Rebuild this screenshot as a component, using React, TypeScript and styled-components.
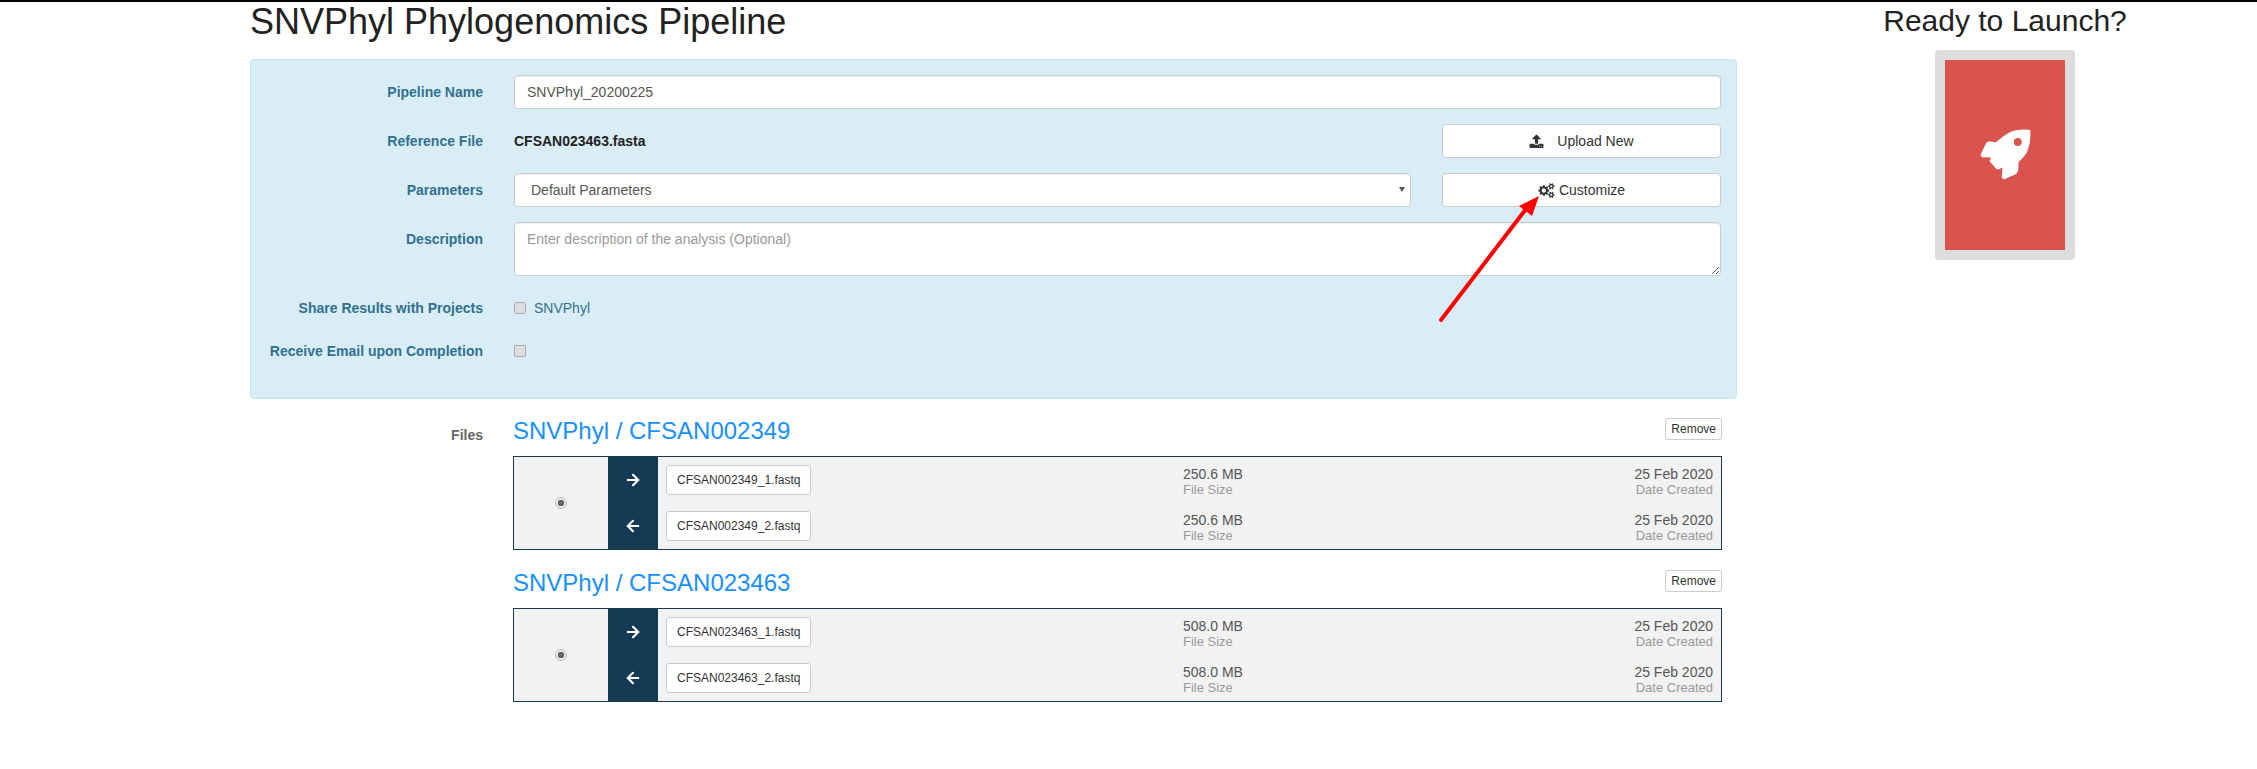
import React from 'react';
import styled, { createGlobalStyle } from 'styled-components';
import { ArrowLeft, ArrowRight } from 'lucide-react';

const GlobalStyle = createGlobalStyle`
  html, body {
    margin: 0;
    padding: 0;
    background: #fff;
  }
  body {
    font-family: "Liberation Sans", Arial, sans-serif;
    font-size: 14px;
    line-height: 20px;
    color: #333;
  }
  * {
    box-sizing: border-box;
  }
`;

const Page = styled.div`
  position: relative;
  display: flex;
  align-items: flex-start;
  min-height: 769px;
  padding-left: 250px;
  border-top: 2px solid #000;
`;

const Main = styled.main`
  width: 1487px;
  flex: none;
`;

const Title = styled.h1`
  margin: 0 0 17px;
  font-size: 36px;
  font-weight: 400;
  line-height: 40px;
  color: #222;
`;

const Panel = styled.section`
  height: 340px;
  padding: 15px 15px 0 0;
  background: #d9edf7;
  border: 1px solid #bce8f1;
  border-radius: 4px;
`;

const FormRow = styled.div<{ $height?: number; $gap?: number }>`
  display: grid;
  grid-template-columns: 232px 1fr;
  column-gap: 31px;
  min-height: ${(p) => p.$height ?? 34}px;
  margin-bottom: ${(p) => p.$gap ?? 15}px;
`;

const Label = styled.label`
  padding-top: 7px;
  font-weight: 700;
  text-align: right;
  color: #31708f;
`;

const Control = styled.input`
  display: block;
  width: 100%;
  height: 34px;
  padding: 6px 12px;
  font: 14px/20px "Liberation Sans", Arial, sans-serif;
  color: #555;
  background: #fff;
  border: 1px solid #ccc;
  border-radius: 4px;
  box-shadow: inset 0 1px 1px rgba(0, 0, 0, 0.075);
`;

const SelectWrap = styled.div`
  position: relative;
  &::after {
    content: '';
    position: absolute;
    top: 14px;
    right: 6px;
    border-top: 5px solid #555;
    border-left: 3px solid transparent;
    border-right: 3px solid transparent;
  }
`;

const Select = styled(Control).attrs({ as: 'select' })`
  padding-left: 16px;
  appearance: none;
`;

const TextArea = styled(Control).attrs({ as: 'textarea' })`
  height: 54px;
  &::placeholder {
    color: #999;
  }
`;

const SplitField = styled.div`
  display: grid;
  grid-template-columns: 1fr 279px;
  column-gap: 31px;
  align-items: center;
`;

const FileName = styled.strong`
  color: #222;
`;

const Button = styled.button`
  display: flex;
  align-items: center;
  justify-content: center;
  height: 34px;
  padding: 6px 12px;
  font: 14px/20px "Liberation Sans", Arial, sans-serif;
  color: #333;
  background: #fff;
  border: 1px solid #ccc;
  border-radius: 4px;
`;

const IconBox = styled.svg<{ $gap: number }>`
  width: ${(p) => (p.$gap > 5 ? 15 : 17)}px;
  height: 15px;
  margin-right: ${(p) => p.$gap}px;
  fill: #333;
`;

const CheckRow = styled.div`
  display: flex;
  align-items: center;
  height: 34px;
  color: #31708f;
`;

const Check = styled.input`
  appearance: none;
  width: 12px;
  height: 12px;
  margin: 0 8px 0 0;
  background: #ddd;
  border: 1px solid #aaa;
  border-radius: 2px;
`;

const FilesSection = styled.section`
  display: grid;
  grid-template-columns: 233px 1fr;
  column-gap: 30px;
  width: 1472px;
  margin-top: 19px;
`;

const FilesLabel = styled.div`
  padding-top: 7px;
  font-weight: 700;
  text-align: right;
  color: #666;
`;

const Sample = styled.div`
  margin-bottom: 20px;
`;

const SampleHeader = styled.div`
  display: flex;
  align-items: flex-start;
  justify-content: space-between;
  height: 26px;
  margin-bottom: 12px;
`;

const SampleName = styled.a`
  font-size: 24px;
  line-height: 26px;
  color: #1890ff;
`;

const RemoveButton = styled.button`
  height: 22px;
  padding: 1px 5px;
  font: 12px/18px "Liberation Sans", Arial, sans-serif;
  color: #333;
  background: #fff;
  border: 1px solid #ccc;
  border-radius: 3px;
`;

const SampleTable = styled.div`
  display: grid;
  grid-template-columns: 94px 50px 1fr;
  height: 94px;
  background: #f2f2f2;
  border: 1px solid #153a54;
`;

const RadioCell = styled.div`
  display: flex;
  align-items: center;
  justify-content: center;
`;

const Radio = styled.input`
  appearance: none;
  width: 12px;
  height: 12px;
  margin: 0;
  border: 1px solid #bbb;
  border-radius: 50%;
  background: radial-gradient(circle, #666 0 3px, #eee 3.6px);
`;

const DirectionCell = styled.div`
  display: grid;
  grid-template-rows: 46px 46px;
  background: #153a54;
  color: #fff;
  & > div {
    display: flex;
    align-items: center;
    justify-content: center;
  }
`;

const FileRows = styled.div`
  display: grid;
  grid-template-rows: 46px 46px;
`;

const FileRow = styled.div`
  display: grid;
  grid-template-columns: 145px 1fr 1fr;
  align-items: center;
  padding: 0 8px;
`;

const FileChip = styled.div`
  height: 30px;
  padding: 0 10px;
  font-size: 12px;
  line-height: 28px;
  white-space: nowrap;
  color: #333;
  background: #fff;
  border: 1px solid #ccc;
  border-radius: 3px;
`;

const Stat = styled.div<{ $right?: boolean }>`
  padding-left: ${(p) => (p.$right ? 0 : 372)}px;
  margin-top: 4px;
  text-align: ${(p) => (p.$right ? 'right' : 'left')};
  white-space: nowrap;
`;

const StatValue = styled.div`
  font-size: 14px;
  line-height: 16px;
  color: #555;
`;

const StatLabel = styled.div`
  font-size: 13px;
  line-height: 16px;
  color: #999;
`;

const Aside = styled.aside`
  display: flex;
  flex-direction: column;
  align-items: center;
  width: 268px;
  margin-left: 134px;
`;

const AsideTitle = styled.h2`
  margin: 2px 0 12px;
  font-size: 30px;
  font-weight: 400;
  line-height: 34px;
  color: #222;
`;

const LaunchButton = styled.button`
  display: flex;
  align-items: center;
  justify-content: center;
  width: 140px;
  height: 210px;
  padding: 0;
  background: #d9534f;
  border: 10px solid #ddd;
  border-radius: 4px;
`;

const RocketIcon = styled.svg`
  width: 53px;
  height: 53px;
  fill: #fff;
`;

const Annotation = styled.svg`
  position: absolute;
  top: -2px;
  left: 0;
  width: 2257px;
  height: 769px;
  pointer-events: none;
`;

const UPLOAD = 'M1344 1472q0-26-19-45t-45-19-45 19-19 45 19 45 45 19 45-19 19-45zm256 0q0-26-19-45t-45-19-45 19-19 45 19 45 45 19 45-19 19-45zm128-224v320q0 40-28 68t-68 28h-1472q-40 0-68-28t-28-68v-320q0-40 28-68t68-28h427q21 56 70.500 92t110.500 36h256q61 0 110.500-36t70.500-92h427q40 0 68 28t28 68zm-325-648q-17 40-59 40h-256v448q0 26-19 45t-45 19h-256q-26 0-45-19t-19-45v-448h-256q-42 0-59-40-17-39 14-69l448-448q18-19 45-19t45 19l448 448q31 30 14 69z';
const COGS = 'M896 896q0-106-75-181t-181-75-181 75-75 181 75 181 181 75 181-75 75-181zm768 512q0-52-38-90t-90-38-90 38-38 90q0 53 37.500 90.500t90.500 37.500 90.500-37.500 37.500-90.500zm0-1024q0-52-38-90t-90-38-90 38-38 90q0 53 37.500 90.500t90.500 37.500 90.500-37.500 37.500-90.500zm-384 421v185q0 10-7 19.500t-16 10.500l-155 24q-11 35-32 76 34 48 90 115 7 11 7 20 0 12-7 19-23 30-82.500 89.500t-78.500 59.500q-11 0-21-7l-115-90q-37 19-77 31-11 108-23 155-7 24-30 24h-186q-11 0-20-7.500t-10-17.500l-23-153q-34-10-75-31l-118 89q-7 7-20 7-11 0-21-8-144-133-144-160 0-9 7-19 10-14 41-53t47-61q-23-44-35-82l-152-24q-10-1-17-9.500t-7-19.500v-185q0-10 7-19.500t16-10.500l155-24q11-35 32-76-34-48-90-115-7-11-7-20 0-12 7-20 22-30 82-89t79-59q11 0 21 7l115 90q34-18 77-32 11-108 23-154 7-24 30-24h186q11 0 20 7.500t10 17.500l23 153q34 10 75 31l118-89q8-7 20-7 11 0 21 8 144 133 144 160 0 8-7 19-12 16-42 54t-45 60q23 48 34 82l152 23q10 2 17 10.500t7 19.500zm640 533v140q0 16-149 31-12 27-30 52 51 113 51 138 0 4-4 7-122 71-124 71-8 0-46-47t-52-68q-20 2-30 2t-30-2q-14 21-52 68t-46 47q-2 0-124-71-4-3-4-7 0-25 51-138-18-25-30-52-149-15-149-31v-140q0-16 149-31 13-29 30-52-51-113-51-138 0-4 4-7 4-2 35-20t59-34 30-16q8 0 46 46.500t52 67.500q20-2 30-2t30 2q51-71 92-112l6-2q4 0 124 70 4 3 4 7 0 25-51 138 17 23 30 52 149 15 149 31zm0-1024v140q0 16-149 31-12 27-30 52 51 113 51 138 0 4-4 7-122 71-124 71-8 0-46-47t-52-68q-20 2-30 2t-30-2q-14 21-52 68t-46 47q-2 0-124-71-4-3-4-7 0-25 51-138-18-25-30-52-149-15-149-31v-140q0-16 149-31 13-29 30-52-51-113-51-138 0-4 4-7 4-2 35-20t59-34 30-16q8 0 46 46.500t52 67.500q20-2 30-2t30 2q51-71 92-112l6-2q4 0 124 70 4 3 4 7 0 25-51 138 17 23 30 52 149 15 149 31z';
// traced from the older font glyph, coordinates are 3x pixels
const ROCKET = 'M330 272 Q331 267 325 267 Q290 264 265 276 Q245 288 226 305 L207 303 Q198 303 195 310 L181 340 Q178 349 186 350 L211 351 L207 362 L226 384 Q231 389 237 386 L246 381 L244 408 Q244 418 253 416 L284 402 Q292 398 293 390 L295 364 Q315 347 322 330 Q332 305 330 272 Z M292 292 A12 12 0 1 0 292 316 A12 12 0 1 0 292 292 Z';

const samples = [
  { name: 'SNVPhyl / CFSAN002349', id: 'CFSAN002349', size: '250.6 MB' },
  { name: 'SNVPhyl / CFSAN023463', id: 'CFSAN023463', size: '508.0 MB' },
];

const App = () => (
  <>
    <GlobalStyle />
    <Page>
      <Main>
        <Title>SNVPhyl Phylogenomics Pipeline</Title>
        <Panel>
          <FormRow>
            <Label>Pipeline Name</Label>
            <Control defaultValue="SNVPhyl_20200225" />
          </FormRow>
          <FormRow>
            <Label>Reference File</Label>
            <SplitField>
              <FileName>CFSAN023463.fasta</FileName>
              <Button>
                <IconBox $gap={13} viewBox="0 0 1792 1792"><path d={UPLOAD} /></IconBox>
                Upload New
              </Button>
            </SplitField>
          </FormRow>
          <FormRow>
            <Label>Parameters</Label>
            <SplitField>
              <SelectWrap>
                <Select defaultValue="default">
                  <option value="default">Default Parameters</option>
                </Select>
              </SelectWrap>
              <Button>
                <IconBox $gap={4} viewBox="0 0 1920 1792"><path d={COGS} /></IconBox>
                Customize
              </Button>
            </SplitField>
          </FormRow>
          <FormRow $height={54}>
            <Label>Description</Label>
            <TextArea placeholder="Enter description of the analysis (Optional)" />
          </FormRow>
          <FormRow $gap={9}>
            <Label>Share Results with Projects</Label>
            <CheckRow>
              <Check type="checkbox" />
              SNVPhyl
            </CheckRow>
          </FormRow>
          <FormRow>
            <Label>Receive Email upon Completion</Label>
            <CheckRow>
              <Check type="checkbox" />
            </CheckRow>
          </FormRow>
        </Panel>
        <FilesSection>
          <FilesLabel>Files</FilesLabel>
          <div>
            {samples.map((sample) => (
              <Sample key={sample.id}>
                <SampleHeader>
                  <SampleName>{sample.name}</SampleName>
                  <RemoveButton>Remove</RemoveButton>
                </SampleHeader>
                <SampleTable>
                  <RadioCell>
                    <Radio type="radio" />
                  </RadioCell>
                  <DirectionCell>
                    <div><ArrowRight size={18} strokeWidth={2.8} /></div>
                    <div><ArrowLeft size={18} strokeWidth={2.8} /></div>
                  </DirectionCell>
                  <FileRows>
                    {[1, 2].map((n) => (
                      <FileRow key={n}>
                        <FileChip>{sample.id}_{n}.fastq</FileChip>
                        <Stat>
                          <StatValue>{sample.size}</StatValue>
                          <StatLabel>File Size</StatLabel>
                        </Stat>
                        <Stat $right>
                          <StatValue>25 Feb 2020</StatValue>
                          <StatLabel>Date Created</StatLabel>
                        </Stat>
                      </FileRow>
                    ))}
                  </FileRows>
                </SampleTable>
              </Sample>
            ))}
          </div>
        </FilesSection>
      </Main>
      <Aside>
        <AsideTitle>Ready to Launch?</AsideTitle>
        <LaunchButton>
          <RocketIcon viewBox="175 265 160 160"><path d={ROCKET} fillRule="evenodd" /></RocketIcon>
        </LaunchButton>
      </Aside>
      <Annotation viewBox="0 0 2257 769">
        <line x1="1441" y1="320" x2="1526" y2="209" stroke="#f00" strokeWidth="4" strokeLinecap="round" />
        <polygon points="1539,196 1519,206 1532,216" fill="#f00" />
      </Annotation>
    </Page>
  </>
);

export default App;
